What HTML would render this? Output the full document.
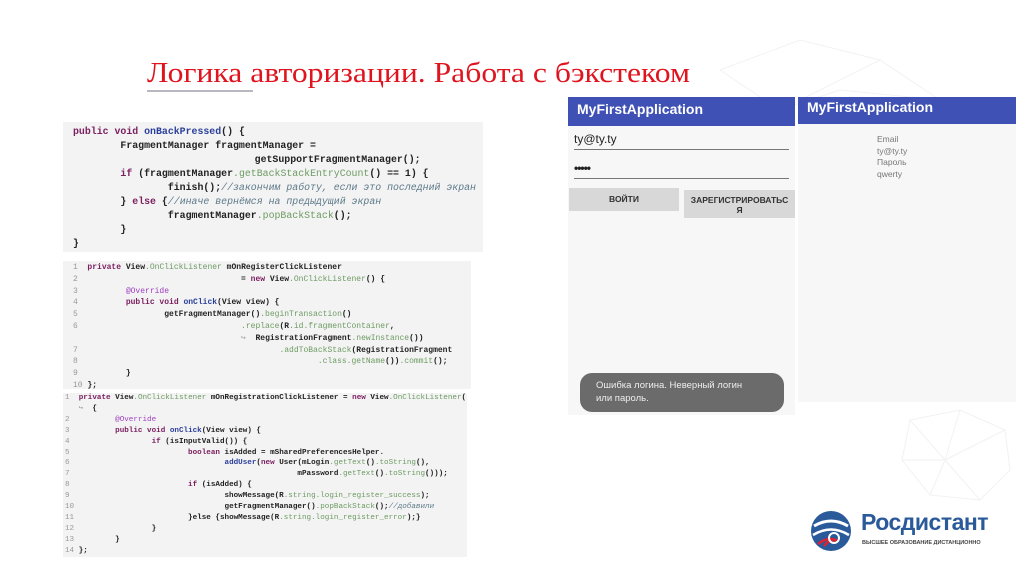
<!DOCTYPE html>
<html><head><meta charset="utf-8"><style>
body{margin:0;width:1024px;height:574px;background:#fff;position:relative;overflow:hidden;font-family:"Liberation Sans",sans-serif}
.abs{position:absolute}
.title{left:147px;top:58px;font-family:"Liberation Serif","Noto Serif CJK SC",serif;font-size:28px;color:#e0141e;white-space:nowrap;transform:scaleX(1.13);transform-origin:0 0}
.code{position:absolute;background:#f3f3f3;font-family:"Liberation Mono",monospace;color:#222;white-space:pre;margin:0;font-weight:bold;overflow:hidden}
.k{color:#7b2060}.m{color:#2a3f9a}.g{color:#6d9b63;font-weight:normal}.c{color:#5d7a8a;font-style:italic;font-weight:normal}.a{color:#a040c0;font-weight:normal}.n{color:#999;font-weight:normal}
.bar{background:#3f51b5;color:#fff;font-weight:bold;font-size:14px}
</style></head><body>
<svg class="abs" style="left:680px;top:30px" width="340" height="540" fill="none" stroke="#f2f2f2" stroke-width="1">
<path d="M40 40 L120 10 L200 30 L260 70 M40 40 L100 80 L200 30 M100 80 L160 60 L260 70"/>
<path d="M230 390 L280 380 L325 400 L330 440 L300 470 L250 465 L222 430 Z M230 390 L265 430 L280 380 M265 430 L325 400 M265 430 L300 470 M265 430 L222 430 M265 430 L250 465"/>
</svg>
<div class="abs title">Логика авторизации. Работа с бэкстеком</div>
<div class="abs" style="left:147px;top:90px;width:106px;height:2px;background:#b8b8c0"></div>

<pre class="code" style="left:63px;top:122px;width:420px;height:130px;font-size:9.9px;line-height:14px;padding:3px 0 0 10px;box-sizing:border-box"><span class="k">public void</span> <span class="m">onBackPressed</span>() {
        FragmentManager fragmentManager =
                                <span style="margin-left:-8px">getSupportFragmentManager();</span>
        <span class="k">if</span> (fragmentManager<span class="g">.getBackStackEntryCount</span>() == 1) {
                finish();<span class="c">//закончим работу, если это последний экран</span>
        } <span class="k">else</span> {<span class="c">//иначе вернёмся на предыдущий экран</span>
                fragmentManager<span class="g">.popBackStack</span>();
        }
}</pre>

<pre class="code" style="left:63px;top:261px;width:408px;height:128px;font-size:8px;line-height:11.8px;padding:1px 0 0 10px;box-sizing:border-box"><span class="n">1</span>  <span class="k">private</span> View<span class="g">.OnClickListener</span> mOnRegisterClickListener
<span class="n">2</span>                                  = <span class="k">new</span> View<span class="g">.OnClickListener</span>() {
<span class="n">3</span>          <span class="a">@Override</span>
<span class="n">4</span>          <span class="k">public void</span> <span class="m">onClick</span>(View view) {
<span class="n">5</span>                  getFragmentManager()<span class="g">.beginTransaction</span>()
<span class="n">6</span>                                  <span class="g">.replace</span>(R<span class="g">.id.fragmentContainer</span>,
                                   <span class="n">↪</span>  RegistrationFragment<span class="g">.newInstance</span>())
<span class="n">7</span>                                          <span class="g">.addToBackStack</span>(RegistrationFragment
<span class="n">8</span>                                                  <span class="g">.class.getName</span>())<span class="g">.commit</span>();
<span class="n">9</span>          }
<span class="n">10</span> };</pre>

<pre class="code" style="left:63px;top:393px;width:404px;height:164px;font-size:7.6px;line-height:10.9px;padding:0 0 0 2px;box-sizing:border-box"><span class="n">1</span>  <span class="k">private</span> View<span class="g">.OnClickListener</span> mOnRegistrationClickListener = <span class="k">new</span> View<span class="g">.OnClickListener</span>()
   <span class="n">↪</span>  {
<span class="n">2</span>          <span class="a">@Override</span>
<span class="n">3</span>          <span class="k">public void</span> <span class="m">onClick</span>(View view) {
<span class="n">4</span>                  <span class="k">if</span> (isInputValid()) {
<span class="n">5</span>                          <span class="k">boolean</span> isAdded = mSharedPreferencesHelper.
<span class="n">6</span>                                  <span class="m">addUser</span>(<span class="k">new</span> User(mLogin<span class="g">.getText</span>()<span class="g">.toString</span>(),
<span class="n">7</span>                                                  mPassword<span class="g">.getText</span>()<span class="g">.toString</span>()));
<span class="n">8</span>                          <span class="k">if</span> (isAdded) {
<span class="n">9</span>                                  showMessage(R<span class="g">.string.login_register_success</span>);
<span class="n">10</span>                                 getFragmentManager()<span class="g">.popBackStack</span>();<span class="c">//добавили</span>
<span class="n">11</span>                         }else {showMessage(R<span class="g">.string.login_register_error</span>);}
<span class="n">12</span>                 }
<span class="n">13</span>         }
<span class="n">14</span> };</pre>

<!-- phone 1 -->
<div class="abs" style="left:568px;top:97px;width:227px;height:318px;background:#f7f7f7"></div>
<div class="abs bar" style="left:568px;top:97px;width:227px;height:29px;line-height:24px;padding-left:9px;box-sizing:border-box">MyFirstApplication</div>
<div class="abs" style="left:574px;top:132px;font-size:12px;color:#222">ty@ty.ty</div>
<div class="abs" style="left:574px;top:149px;width:215px;height:1px;background:#777"></div>
<div class="abs" style="left:574px;top:161px;font-size:12px;color:#222;font-weight:bold;letter-spacing:-1px">•••••</div>
<div class="abs" style="left:574px;top:178px;width:215px;height:1px;background:#777"></div>
<div class="abs" style="left:569px;top:188px;width:110px;height:23px;background:#d8d8d8;font-size:8.5px;font-weight:bold;color:#333;text-align:center;line-height:23px">ВОЙТИ</div>
<div class="abs" style="left:684px;top:190px;width:111px;height:28px;background:#d8d8d8;font-size:8.5px;font-weight:bold;color:#333;text-align:center;line-height:10px;padding-top:5px;box-sizing:border-box">ЗАРЕГИСТРИРОВАТЬС<br>Я</div>
<div class="abs" style="left:580px;top:373px;width:204px;height:39px;background:#6b6b6b;border-radius:12px;color:#eee;font-size:9.5px;line-height:12.5px;padding:7px 0 0 16px;box-sizing:border-box">Ошибка логина. Неверный логин<br>или пароль.</div>

<!-- phone 2 -->
<div class="abs" style="left:798px;top:97px;width:218px;height:305px;background:#f7f7f7"></div>
<div class="abs bar" style="left:798px;top:97px;width:218px;height:27px;line-height:20px;padding-left:9px;box-sizing:border-box">MyFirstApplication</div>
<div class="abs" style="left:877px;top:134px;font-size:8.5px;line-height:11.5px;color:#777">Email<br>ty@ty.ty<br>Пароль<br>qwerty</div>

<!-- logo -->
<svg class="abs" style="left:808px;top:508px" width="46" height="46" viewBox="0 0 46 46">
<circle cx="23" cy="23" r="20" fill="#2a5a9a"/>
<path d="M6 18 Q23 8 40 18" stroke="#fff" stroke-width="3" fill="none"/>
<path d="M5 27 Q23 16 41 27" stroke="#fff" stroke-width="2.5" fill="none"/>
<path d="M10 36 Q20 28 30 33 Q22 30 16 38" stroke="#d23" stroke-width="2.5" fill="none"/>
<circle cx="26" cy="30" r="5" fill="none" stroke="#fff" stroke-width="2"/>
</svg>
<div class="abs" style="left:861px;top:509px;font-size:23px;font-weight:bold;color:#2a5a9a;letter-spacing:-0.5px">Росдистант</div>
<div class="abs" style="left:862px;top:540px;font-size:5.5px;color:#444;font-weight:bold;white-space:nowrap">ВЫСШЕЕ ОБРАЗОВАНИЕ ДИСТАНЦИОННО</div>
</body></html>
